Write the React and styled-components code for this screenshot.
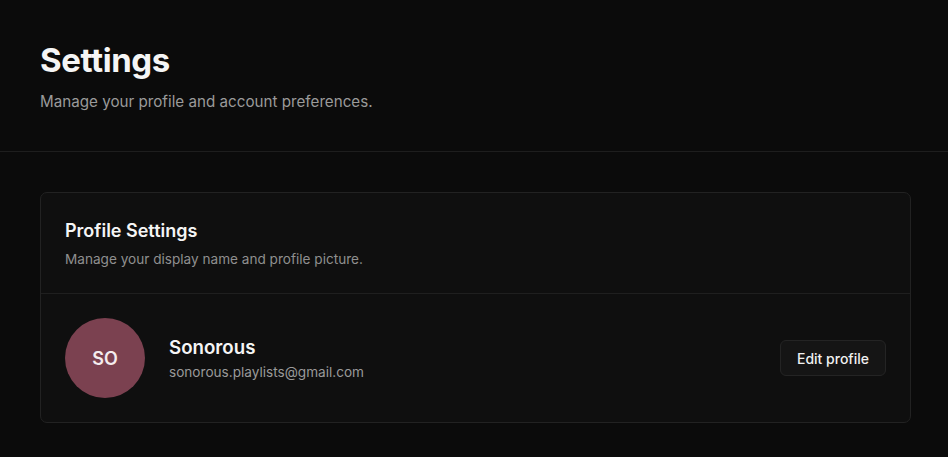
import React from 'react';
import styled, { createGlobalStyle } from 'styled-components';

const Global = createGlobalStyle`
    html, body { margin: 0; padding: 0; background: #0b0b0b; }
    body {
        font-family: Inter, "Noto Sans", "Liberation Sans", sans-serif;
        color: #f5f5f5;
        -webkit-font-smoothing: antialiased;
    }
`

const Page = styled.div`
    min-height: 457px;
    background: #0b0b0b;
`

const Header = styled.header`
    padding: 40px 40px 0;
    height: 111px;
    border-bottom: 1px solid #1e1e1e;
`

const Title = styled.h1`
    margin: 0;
    font-size: 33px; font-weight: 700;
    letter-spacing: -0.4px;
    line-height: 40px;
`

const Subtitle = styled.p`
    margin: 12px 0 0;
    font-size: 15.2px;
    color: #9a9a9a;
    line-height: 20px;
`

const Main = styled.main`
    padding: 40px 37px 0 40px;
`

const Card = styled.section`
    background: #0f0f0f;
    border: 1px solid #222222;
    border-radius: 7px;
`

const CardHead = styled.div`
    padding: 26px 24px 25px;
    border-bottom: 1px solid #1f1f1f;
`

const CardTitle = styled.h2`
    margin: 0;
    font-size: 18px; font-weight: 600;
    line-height: 24px;
`

const CardText = styled.p`
    margin: 7px 0 0;
    font-size: 13.6px;
    color: #8f8f8f;
    line-height: 18px;
`

const Row = styled.div`
    display: flex;
    align-items: center;
    padding: 24px;
`

const Avatar = styled.div`
    width: 80px; height: 80px;
    border-radius: 50%;
    background: #7b4150;
    display: flex; align-items: center; justify-content: center;
    font-size: 18px; font-weight: 600;
    color: #f4ecee;
    flex-shrink: 0;
`

const Info = styled.div`
    margin-left: 24px;
    flex: 1;
`

const Name = styled.div`
    font-size: 18.7px; font-weight: 600;
    line-height: 24px;
`

const Email = styled.div`
    margin-top: 3px;
    font-size: 13.6px;
    color: #9a9a9a;
    line-height: 18px;
`

const Button = styled.button`
    height: 36px;
    padding: 0 16px;
    background: #151515;
    border: 1px solid #242424;
    border-radius: 6px;
    color: #f0f0f0;
    font-family: inherit;
    font-size: 14px; font-weight: 500;
    cursor: pointer;
`

export default function App() {
    return (
        <Page>
            <Global />
            <Header>
                <Title>Settings</Title>
                <Subtitle>Manage your profile and account preferences.</Subtitle>
            </Header>
            <Main>
                <Card>
                    <CardHead>
                        <CardTitle>Profile Settings</CardTitle>
                        <CardText>Manage your display name and profile picture.</CardText>
                    </CardHead>
                    <Row>
                        <Avatar>SO</Avatar>
                        <Info>
                            <Name>Sonorous</Name>
                            <Email>sonorous.playlists@gmail.com</Email>
                        </Info>
                        <Button>Edit profile</Button>
                    </Row>
                </Card>
            </Main>
        </Page>
    );
}
